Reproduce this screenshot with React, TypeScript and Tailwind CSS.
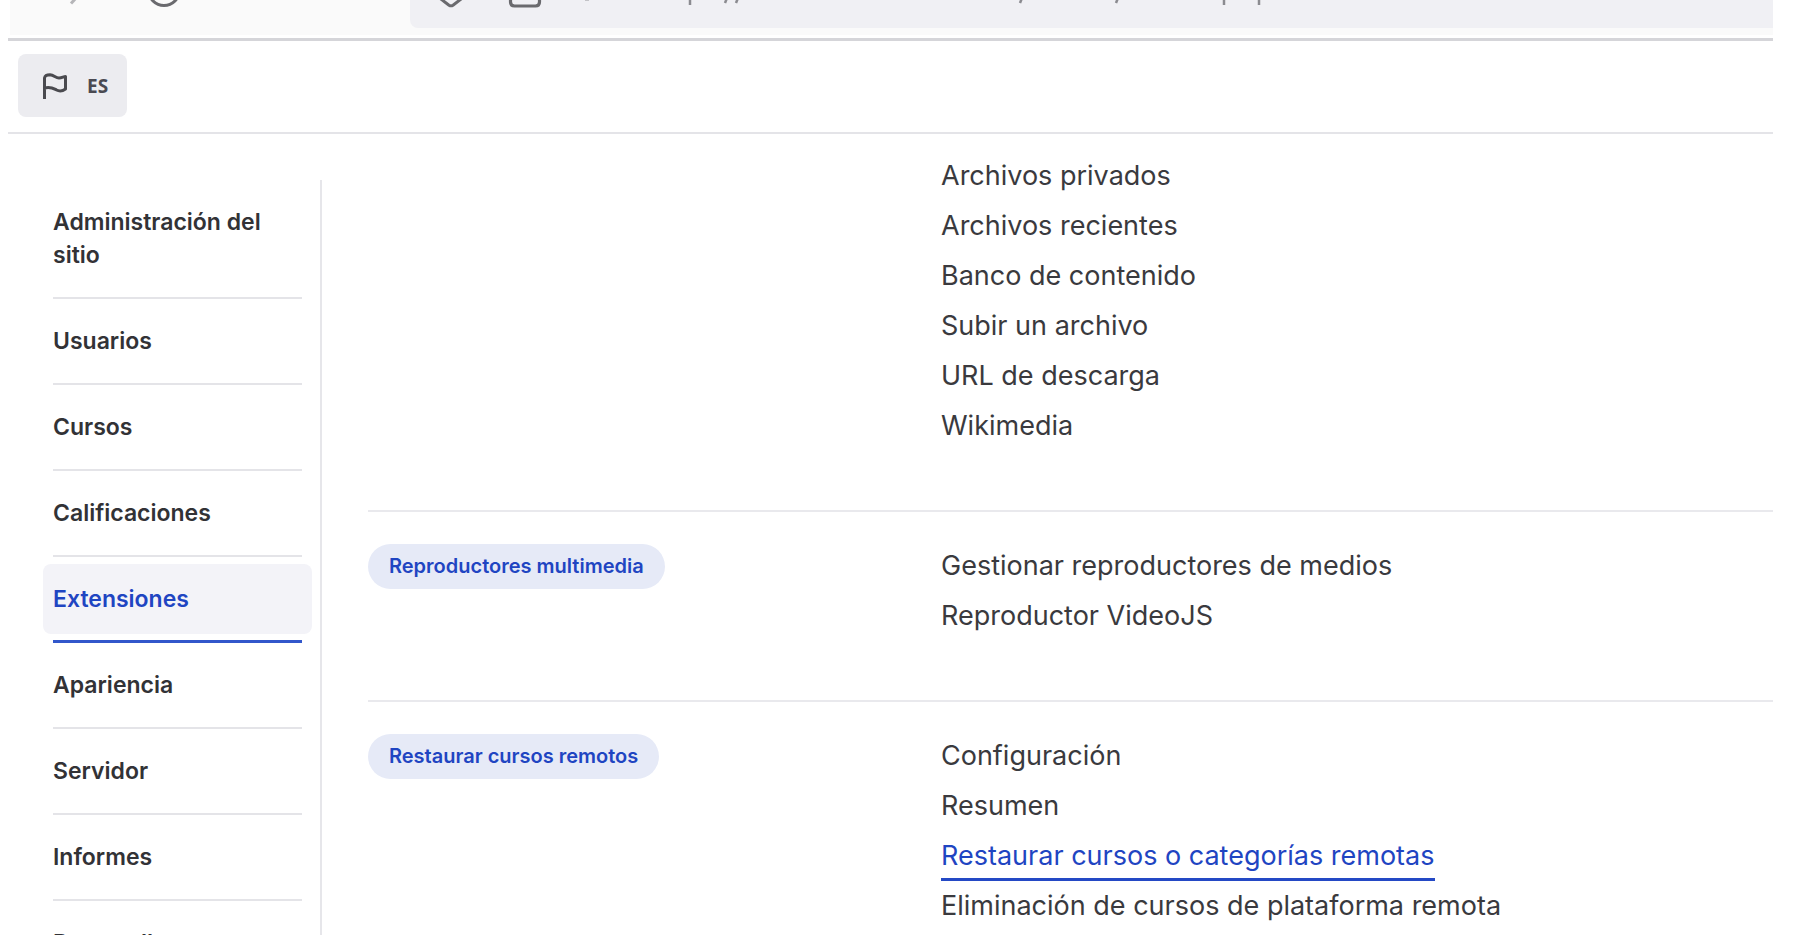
const navItems = [
  "Administración del sitio",
  "Usuarios",
  "Cursos",
  "Calificaciones",
  "Extensiones",
  "Apariencia",
  "Servidor",
  "Informes",
  "Desarrollo",
];

const sections = [
  {
    title: "",
    links: [
      "Archivos privados",
      "Archivos recientes",
      "Banco de contenido",
      "Subir un archivo",
      "URL de descarga",
      "Wikimedia",
    ],
  },
  {
    title: "Reproductores multimedia",
    links: ["Gestionar reproductores de medios", "Reproductor VideoJS"],
  },
  {
    title: "Restaurar cursos remotos",
    links: [
      "Configuración",
      "Resumen",
      "Restaurar cursos o categorías remotas",
      "Eliminación de cursos de plataforma remota",
    ],
  },
];

const activeNav = "Extensiones";
const activeLink = "Restaurar cursos o categorías remotas";

function FlagIcon() {
  return (
    <svg width="28" height="28" viewBox="0 0 28 28" fill="none" stroke="#4a4a4f" strokeWidth="3" strokeLinejoin="round" aria-hidden="true">
      <path d="M3.5 27V6C4 3.5 6.500 2.800 9 2.800C13 3 14.500 6 18 6C21 6 22.500 4.500 24.500 4.500V17C22 18.800 18.500 19.500 15.500 18C12.500 16.500 10 14.500 3.500 16" />
    </svg>
  );
}

function BrowserBar() {
  return (
    <div className="ml-[2px] flex h-[35px] shrink-0 bg-[#fafafa]">
      <div className="w-[400px] shrink-0">
        <svg width="400" height="20" viewBox="9 0 400 20" fill="none" aria-hidden="true">
          <path d="M70 3.500L76 -3" stroke="#b5b5b8" strokeWidth="3" />
          <circle cx="163" cy="-10" r="15.500" stroke="#6a6a6e" strokeWidth="3" />
        </svg>
      </div>
      <div className="h-[28px] grow overflow-hidden rounded-bl-lg bg-[#f0f0f4]">
        <svg width="900" height="20" viewBox="409 0 900 20" fill="none" aria-hidden="true">
          <path d="M436 -4L448 5.200Q450 6.500 452 5.200L464 -4" stroke="#6a6a6e" strokeWidth="3" />
          <path d="M509.500 -4V2Q509.500 6 513.500 6H534.500Q538.500 6 538.500 2V-4" stroke="#6a6a6e" strokeWidth="3.200" />
          <path d="M584 0H588" stroke="#b5b5b8" strokeWidth="1.500" />
          <path d="M689 -2V5M1223 -2V5M1258 -2V5" stroke="#8b8b90" strokeWidth="2.500" />
          <path d="M724 3L726 -2M735 3L737 -2M1019 3L1021 -2M1115 3L1117 -2" stroke="#8b8b90" strokeWidth="2.500" />
        </svg>
      </div>
    </div>
  );
}

function Sidebar() {
  return (
    <nav className="mt-[46px] w-[314px] shrink-0 border-r-2 border-[#e6e6ea] pl-[35px]">
      <ul>
        {navItems.map((item, i) => {
          const active = item === activeNav;
          return (
            <li key={item}>
              <a
                href="#"
                aria-current={active ? "page" : undefined}
                className={`mr-2 flex items-center rounded-lg px-[10px] text-[23px] leading-[33px] font-semibold ${
                  i === 0 ? "min-h-[117px]" : active ? "mt-[7px] mb-[6px] min-h-[70px]" : "min-h-[84px]"
                } ${active ? "bg-[#f3f3f8] text-[#1f45c2]" : "text-[#323236]"}`}
              >
                {item}
              </a>
              <div className={`mr-[18px] ml-[10px] ${active ? "h-[3px] bg-[#3257cb]" : "h-[2px] bg-[#e4e4e8]"}`} />
            </li>
          );
        })}
      </ul>
    </nav>
  );
}

export default function App() {
  return (
    <div className="flex h-screen flex-col overflow-hidden bg-white pr-[25px] pl-2 font-['Inter',sans-serif]">
      <BrowserBar />
      <header className="mt-[3px] flex h-24 shrink-0 items-center border-t-3 border-b-2 border-t-[#d5d5d9] border-b-[#e4e4e8] pb-[2px] pl-[10px]">
        <button type="button" className="flex h-[63px] items-center gap-[18px] rounded-lg bg-[#ececf0] pr-[19px] pl-[23px]">
          <FlagIcon />
          <span className="font-['Open_Sans',sans-serif] text-[19px] leading-6 font-bold text-[#4a4a52]">ES</span>
        </button>
      </header>
      <div className="flex min-h-0 grow">
        <Sidebar />
        <main className="ml-[46px] min-w-0 grow pt-[17px]">
          {sections.map((section, i) => (
            <section
              key={section.title}
              className={`grid grid-cols-[573px_1fr] pb-[59px] ${i === 0 ? "" : "border-t-2 border-[#e9e9ed] pt-[29px]"}`}
            >
              <div className="flex h-[50px] items-center">
                {section.title && (
                  <h2 className="rounded-full bg-[#e6eaf7] px-[21px] text-xl leading-[45px] font-semibold text-[#1f45c2]">
                    {section.title}
                  </h2>
                )}
              </div>
              <ul className="text-[27px] leading-[50px] whitespace-nowrap text-[#3a3a3e]">
                {section.links.map((link) => (
                  <li key={link} className="flex h-[50px]">
                    <a href="#" className={link === activeLink ? "border-b-3 border-[#2449c5] text-[#1f45c2]" : ""}>
                      {link}
                    </a>
                  </li>
                ))}
              </ul>
            </section>
          ))}
        </main>
      </div>
    </div>
  );
}
